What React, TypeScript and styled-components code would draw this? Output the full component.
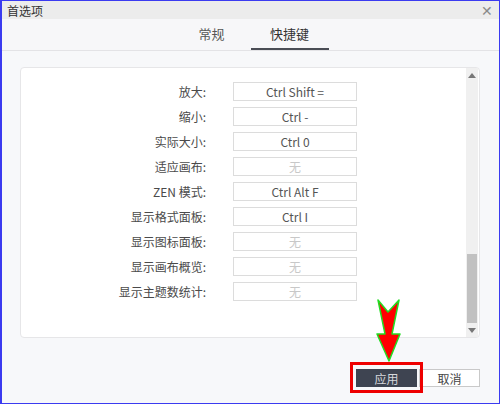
import React from 'react';
import styled, { createGlobalStyle } from 'styled-components';

const GlobalStyle = createGlobalStyle`
    html, body {
        margin: 0;
        padding: 0;
        background: #ffffff;
    }
    * {
        box-sizing: border-box;
    }
`;

const FONT = `"Noto Sans CJK SC", "Noto Sans", "Liberation Sans", sans-serif`;

const SHORTCUTS: { label: string; keys: string }[] = [
    { label: '放大:', keys: 'Ctrl Shift =' },
    { label: '缩小:', keys: 'Ctrl -' },
    { label: '实际大小:', keys: 'Ctrl 0' },
    { label: '适应画布:', keys: '' },
    { label: 'ZEN 模式:', keys: 'Ctrl Alt F' },
    { label: '显示格式面板:', keys: 'Ctrl I' },
    { label: '显示图标面板:', keys: '' },
    { label: '显示画布概览:', keys: '' },
    { label: '显示主题数统计:', keys: '' },
];

const Window = styled.div`
    position: relative;
    width: 500px;
    height: 404px;
    border: 1px solid #3b3bf0;
    border-left-width: 2px;
    display: flex;
    flex-direction: column;
    background: #f7f8fa;
    font-family: ${FONT};
    overflow: hidden;
`;

const TitleBar = styled.div`
    height: 18px;
    display: flex;
    align-items: center;
    justify-content: space-between;
    padding: 0 6px 0 5px;
    background: #ececec;
    font-size: 12px;
    color: #333;
`;

const Close = styled.span`
    font-size: 14px;
    color: #8a8a8a;
    line-height: 1;
`;

const TabBar = styled.div`
    height: 32px;
    display: flex;
    justify-content: center;
    background: #f7f7f9;
    border-bottom: 1px solid #e3e3e6;
`;

const Tab = styled.div<{ $active?: boolean }>`
    width: 78px;
    display: flex;
    align-items: center;
    justify-content: center;
    font-size: 13px;
    color: ${p => (p.$active ? '#333' : '#555')};
    border-bottom: 2px solid ${p => (p.$active ? '#4a4d55' : 'transparent')};
`;

const Body = styled.div`
    flex: 1;
    display: flex;
    flex-direction: column;
    padding: 16px 19px 0 18px;
`;

const Panel = styled.div`
    height: 271px;
    display: flex;
    background: #ffffff;
    border: 1px solid #e6e6e8;
    border-radius: 4px;
`;

const List = styled.div`
    flex: 1;
    display: grid;
    grid-template-columns: 185px 124px;
    grid-auto-rows: 19px;
    column-gap: 27px;
    row-gap: 6px;
    align-content: start;
    padding-top: 14px;
`;

const Label = styled.div`
    display: flex;
    align-items: center;
    justify-content: flex-end;
    font-size: 12px;
    color: #4a4a4a;
`;

const KeyBox = styled.div<{ $empty?: boolean }>`
    display: flex;
    align-items: center;
    justify-content: center;
    border: 1px solid #dcdcdc;
    font-size: 12px;
    color: ${p => (p.$empty ? '#c8c8c8' : '#555')};
`;

const ScrollTrack = styled.div`
    width: 12px;
    margin-right: 1px;
    display: flex;
    flex-direction: column;
    background: #f0f0f0;
`;

const ScrollArrow = styled.div`
    height: 14px;
    display: flex;
    align-items: center;
    justify-content: center;
`;

const ScrollSpace = styled.div`
    flex: 1;
    display: flex;
    flex-direction: column;
    justify-content: flex-end;
`;

const ScrollThumb = styled.div`
    height: 69px;
    margin: 0 1px;
    background: #c1c1c1;
`;

const Footer = styled.div`
    display: flex;
    justify-content: flex-end;
    gap: 2px;
    margin-top: 31px;
`;

const Button = styled.div<{ $primary?: boolean }>`
    width: 61px;
    height: 18px;
    display: flex;
    align-items: center;
    justify-content: center;
    font-size: 12px;
    color: ${p => (p.$primary ? '#d6d8dc' : '#444')};
    background: ${p => (p.$primary ? '#3e4451' : '#ffffff')};
    border: 1px solid ${p => (p.$primary ? '#3e4451' : '#c9c9c9')};
`;

const Highlight = styled.div`
    position: absolute;
    left: 348px;
    top: 361px;
    width: 73px;
    height: 31px;
    border: 3px solid #ee0000;
    pointer-events: none;
`;

const ArrowSvg = styled.svg`
    position: absolute;
    left: 370px;
    top: 294px;
`;

const Triangle: React.FC<{ up?: boolean }> = ({ up }) => (
    <svg width="8" height="5" viewBox="0 0 8 5">
        <polygon points={up ? '4,0 8,5 0,5' : '0,0 8,0 4,5'} fill="#777" />
    </svg>
);

export default function App() {
    return (
        <>
            <GlobalStyle />
            <Window>
                <TitleBar>
                    <span>首选项</span>
                    <Close>✕</Close>
                </TitleBar>
                <TabBar>
                    <Tab>常规</Tab>
                    <Tab $active>快捷键</Tab>
                </TabBar>
                <Body>
                    <Panel>
                        <List>
                            {SHORTCUTS.map(item => (
                                <React.Fragment key={item.label}>
                                    <Label>{item.label}</Label>
                                    <KeyBox $empty={!item.keys}>{item.keys || '无'}</KeyBox>
                                </React.Fragment>
                            ))}
                        </List>
                        <ScrollTrack>
                            <ScrollArrow><Triangle up /></ScrollArrow>
                            <ScrollSpace>
                                <ScrollThumb />
                            </ScrollSpace>
                            <ScrollArrow><Triangle /></ScrollArrow>
                        </ScrollTrack>
                    </Panel>
                    <Footer>
                        <Button $primary>应用</Button>
                        <Button>取消</Button>
                    </Footer>
                </Body>
                <Highlight />
                <ArrowSvg width="34" height="70" viewBox="370 294 34 70">
                    <polygon
                        points="376,299 386,311 397,299 390,333 398,333 387,360 375,333 383,333"
                        fill="#ff0000"
                        stroke="#22dd22"
                        strokeWidth="1.5"
                        strokeLinejoin="round"
                    />
                </ArrowSvg>
            </Window>
        </>
    );
}
